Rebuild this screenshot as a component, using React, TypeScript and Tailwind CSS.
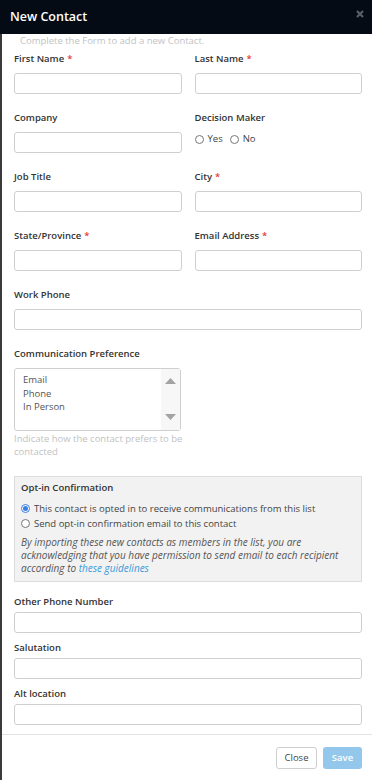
import React from "react";

const font = { fontFamily: '"Open Sans", "Liberation Sans", sans-serif' };

const Label = ({ text, required }: { text: string; required?: boolean }) => (
  <div className="text-[9.5px] leading-[14px] font-semibold text-[#333] mb-[7px]">
    {text}
    {required && <span className="text-[#e53935] ml-[3px]">*</span>}
  </div>
);

const SmallLabel = ({ text }: { text: string }) => (
  <div className="text-[9.5px] leading-[12px] font-semibold text-[#333] mb-[4px]">
    {text}
  </div>
);

const Input = () => (
  <input
    type="text"
    className="block w-full h-[21px] border border-[#cfcfcf] rounded-[3px] bg-white outline-none"
  />
);

const Radio = ({ checked }: { checked?: boolean }) =>
  checked ? (
    <span className="inline-flex items-center justify-center w-[9px] h-[9px] rounded-full border border-[#3b7de0] bg-white shrink-0">
      <span className="w-[5px] h-[5px] rounded-full bg-[#3b7de0]" />
    </span>
  ) : (
    <span className="inline-block w-[9px] h-[9px] rounded-full border border-[#777] bg-white shrink-0" />
  );

const Field = ({ label, required }: { label: string; required?: boolean }) => (
  <div className="flex-1">
    <Label text={label} required={required} />
    <Input />
  </div>
);

export default function App() {
  return (
    <div className="w-[372px] h-[780px] bg-[#3a3a3a] pl-[2px]" style={font}>
      <div className="h-full bg-white flex flex-col">
        <div className="h-[34px] -ml-[2px] bg-[#050b15] flex items-center justify-between pl-[10px] pr-[8px] shrink-0">
          <span className="text-white text-[12.5px] font-semibold">New Contact</span>
          <svg width="8" height="8" viewBox="0 0 8 8" className="-mt-[6px]">
            <path d="M1 1L7 7M7 1L1 7" stroke="#5a5f66" strokeWidth="2.2" />
          </svg>
        </div>

        <div className="flex-1 pl-[12px] pr-[10px]">
          <div className="pl-[6px] text-[9.5px] leading-[14px] text-[#c2c2c2] mb-[4px]">
            Complete the Form to add a new Contact.
          </div>

          <div className="flex gap-[13px] mb-[17px]">
            <Field label="First Name" required />
            <Field label="Last Name" required />
          </div>

          <div className="flex gap-[13px] mb-[17px]">
            <Field label="Company" />
            <div className="flex-1">
              <Label text="Decision Maker" />
              <div className="flex items-center text-[9.5px] leading-[14px] text-[#444]">
                <Radio />
                <span className="ml-[4px]">Yes</span>
                <span className="ml-[7px] flex items-center">
                  <Radio />
                </span>
                <span className="ml-[4px]">No</span>
              </div>
            </div>
          </div>

          <div className="flex gap-[13px] mb-[17px]">
            <Field label="Job Title" />
            <Field label="City" required />
          </div>

          <div className="flex gap-[13px] mb-[17px]">
            <Field label="State/Province" required />
            <Field label="Email Address" required />
          </div>

          <div className="mb-[17px]">
            <Label text="Work Phone" />
            <Input />
          </div>

          <div className="w-[167px]">
            <Label text="Communication Preference" />
            <div className="h-[63px] border border-[#cfcfcf] rounded-[3px] flex">
              <div className="flex-1 pl-[8px] pt-[4px] text-[9.5px] leading-[13.5px] text-[#555]">
                <div>Email</div>
                <div>Phone</div>
                <div>In Person</div>
              </div>
              <div className="w-[19px] bg-[#f7f7f7] flex flex-col items-center justify-between pt-[9px] pb-[10px]">
                <svg width="11" height="6" viewBox="0 0 11 6">
                  <path d="M5.5 0L11 6H0Z" fill="#a3a3a3" />
                </svg>
                <svg width="11" height="6" viewBox="0 0 11 6">
                  <path d="M0 0H11L5.5 6Z" fill="#a3a3a3" />
                </svg>
              </div>
            </div>
            <div className="mt-[1px] text-[9.5px] leading-[13px] text-[#c2c2c2] whitespace-nowrap">
              Indicate how the contact prefers to be
              <br />
              contacted
            </div>
          </div>

          <div className="mt-[18px] bg-[#f2f2f2] border border-[#dddddd] pt-[4px] pb-[6px] px-[6px]">
            <div className="text-[9.5px] leading-[14px] font-semibold text-[#333] mb-[6px]">
              Opt-in Confirmation
            </div>
            <div className="flex items-center gap-[4px] text-[9.5px] leading-[15px] text-[#444]">
              <Radio checked />
              <span>This contact is opted in to receive communications from this list</span>
            </div>
            <div className="flex items-center gap-[4px] text-[9.5px] leading-[15px] text-[#444]">
              <Radio />
              <span>Send opt-in confirmation email to this contact</span>
            </div>
            <div className="mt-[5px] text-[10px] leading-[13px] italic text-[#555] whitespace-nowrap">
              By importing these new contacts as members in the list, you are
              <br />
              acknowledging that you have permission to send email to each recipient
              <br />
              according to <span className="text-[#3a9ad9]">these guidelines</span>
            </div>
          </div>

          <div className="mt-[14px] mb-[9px]">
            <SmallLabel text="Other Phone Number" />
            <Input />
          </div>
          <div className="mb-[9px]">
            <SmallLabel text="Salutation" />
            <Input />
          </div>
          <div>
            <SmallLabel text="Alt location" />
            <Input />
          </div>
        </div>

        <div className="border-t border-[#e3e3e3] h-[46px] flex justify-end items-start pt-[12px] pr-[10px] gap-[6px] shrink-0">
          <button className="h-[22px] w-[41px] border border-[#cfcfcf] rounded-[3px] bg-white text-[9.5px] text-[#444]">
            Close
          </button>
          <button className="h-[22px] w-[39px] rounded-[3px] bg-[#93c7ec] text-[9.5px] font-semibold text-white">
            Save
          </button>
        </div>
      </div>
    </div>
  );
}
